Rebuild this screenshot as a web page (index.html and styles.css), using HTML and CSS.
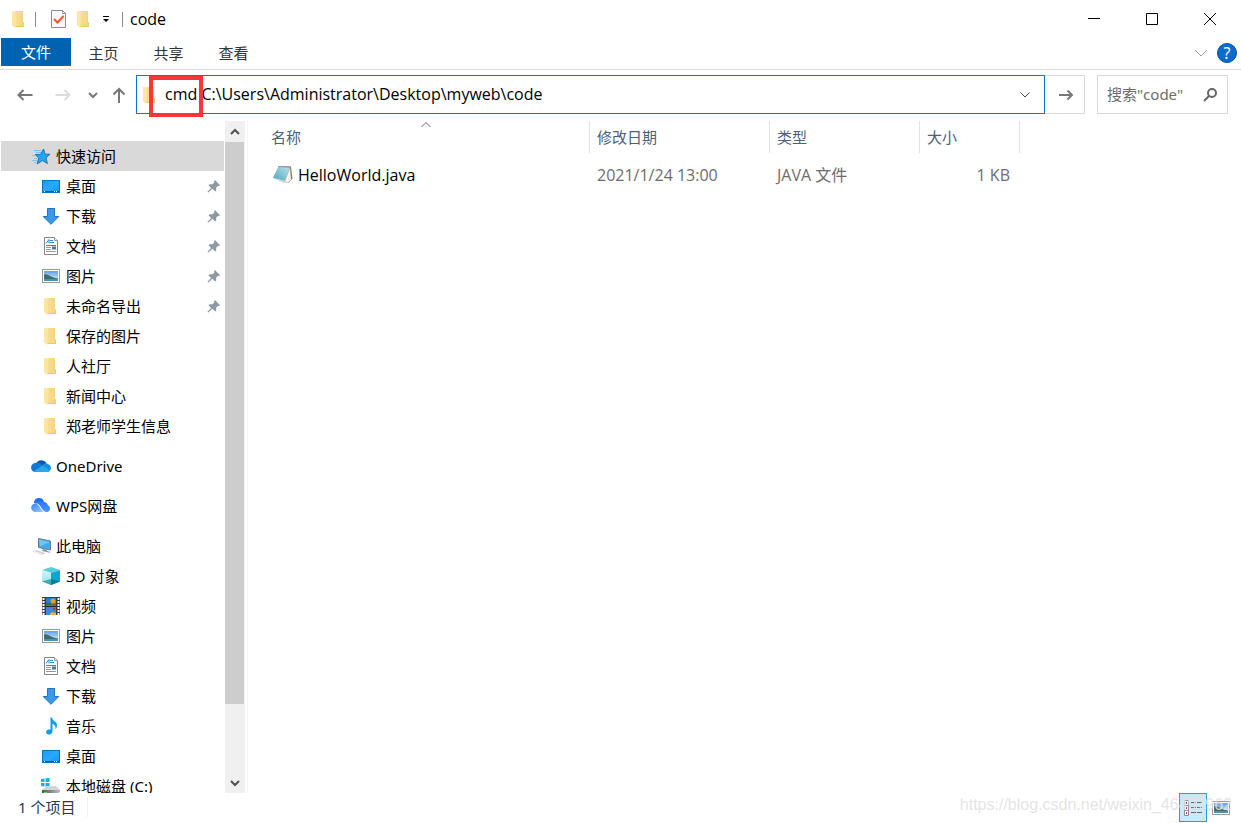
FILE: index.html
```html
<!DOCTYPE html>
<html lang="zh-CN">
<head>
<meta charset="utf-8">
<title>code</title>
<link rel="stylesheet" href="styles.css">
</head>
<body>
<svg class="sprite" aria-hidden="true">
  <defs>
    <linearGradient id="gFolder" x1="0" y1="0" x2="1" y2="0"><stop offset="0" stop-color="#f8df97"/><stop offset="1" stop-color="#f5d477"/></linearGradient>
    <linearGradient id="gDesk" x1="0" y1="0" x2="1" y2="1"><stop offset="0" stop-color="#149bfb"/><stop offset=".5" stop-color="#2aa9ff"/><stop offset="1" stop-color="#0c97fa"/></linearGradient>
    <linearGradient id="gSky" x1="0" y1="0" x2="0" y2="1"><stop offset="0" stop-color="#5d9fe8"/><stop offset="1" stop-color="#e4f3fb"/></linearGradient>
    <linearGradient id="gNote" x1="0" y1="1" x2="1" y2="0"><stop offset="0" stop-color="#4fa5ba"/><stop offset="1" stop-color="#bde5ee"/></linearGradient>
    <linearGradient id="gWps" x1="0" y1="0" x2="0" y2="1"><stop offset="0" stop-color="#1a68f5"/><stop offset="1" stop-color="#4c9bff"/></linearGradient>
    <linearGradient id="gWpsFront" x1="0" y1="0" x2="1" y2="1"><stop offset="0" stop-color="#2f80f8"/><stop offset="1" stop-color="#a4cdff"/></linearGradient>
    <linearGradient id="gCube" x1="0" y1="0" x2="0" y2="1"><stop offset="0" stop-color="#d4f4f6"/><stop offset="1" stop-color="#8fe3e9"/></linearGradient>
    <linearGradient id="gDrive" x1="0" y1="0" x2="1" y2="0"><stop offset="0" stop-color="#55595c"/><stop offset="1" stop-color="#b9bcbe"/></linearGradient>
  </defs>
  <symbol id="folder" viewBox="0 0 20 20"><path d="M6 2h8v11l.8.8V18H6z" fill="url(#gFolder)"/><path d="M14 13l.8.8V18H7v-1h7z" fill="#efca68"/><path d="M3 2h4L6 5v13.500L3 16z" fill="#fde9ad"/><path d="M3 2.500L6.500 5v14L3 16.500z" fill="#fde5a3"/></symbol>
  <symbol id="desk" viewBox="0 0 20 20"><rect x="1.500" y="4.500" width="17" height="12" fill="url(#gDesk)" stroke="#0b74bd"/><path d="M2 15.500h16" stroke="#07599b"/><path d="M3 15.500h1M13 15.500h1M15 15.500h1" stroke="#fff"/></symbol>
  <symbol id="down" viewBox="0 0 20 20"><path d="M6.500 2.500h7v8h4.300L10 18.300 2.200 10.500h4.300z" fill="#3b97e8" stroke="#2672bd"/></symbol>
  <symbol id="doc" viewBox="0 0 20 20"><path d="M3.500 1.500h10l3 3v14h-13z" fill="#fff" stroke="#858585"/><path d="M13.500 1.500v3h3" fill="#eee" stroke="#999"/><path d="M5 7.500L8 3.500v4M9 4.500h3M9 6.500h4M5 9.500h10" fill="none" stroke="#1b8fd8"/><path d="M11 10.500h4v3h-4z" fill="#347eb5"/><path d="M5 11.500h5M5 13.500h5M5 15.500h10" stroke="#999"/></symbol>
  <symbol id="pic" viewBox="0 0 20 20"><rect x="1.500" y="3.500" width="17" height="13" fill="#fff" stroke="#999"/><rect x="3" y="5" width="14" height="10" fill="url(#gSky)"/><path d="M3 8.500c4-1 6 3 14 4v1H3z" fill="#3f6f68"/><path d="M3 13h14v2H3z" fill="#4a93b8"/></symbol>
  <symbol id="star" viewBox="0 0 20 20"><path d="M12.500 3l1.600 5.200H19l-4 3.600 1.400 5.700-5-3-5.200 3.500 1.500-6-3.700-3.500H9.500z" fill="#28a3ef" stroke="#1976bb"/><path d="M3 4.500h7M5 6.500h5M1 9.500h4M3 12.500h3M1 14.500h5M3 16.500h2" stroke="#82bfe9"/></symbol>
  <symbol id="pin" viewBox="0 0 16 16"><path d="M9 1l6 6-1.300.9-1.100-.3-2.200 2.300.2 3.200-1.200 1.200-3.200-3.200L1.500 15.500l-1-1 4.200-4.300-3-3L3 6l3.200.1 2.300-2-.4-1.600z" fill="#8e99a3"/></symbol>
  <symbol id="onedrive" viewBox="0 0 20 20"><path d="M5 7.500A6 6 0 0 1 15.500 7l-7 6.500z" fill="#0a59ae"/><path d="M4.500 16A4.500 4.500 0 0 1 4.600 7c3-.6 4.800.7 7.400 2.700L5 16z" fill="#1178d4"/><path d="M11.500 9.500C13 7 16 6.500 17 8.200a4 4 0 0 1-.5 7.800H8z" fill="#1490df"/><path d="M2.500 15.500L11.500 9.500 19 14.500a3.500 3.500 0 0 1-3 1.500H4.500a5 5 0 0 1-2-.5z" fill="#28a8ea"/></symbol>
  <symbol id="wps" viewBox="0 0 20 20"><path d="M3 7a5 5 0 0 1 9.900-1 4.500 4.500 0 0 1 4 3.200A3.600 3.600 0 0 1 16.500 16H13L7 8z" fill="url(#gWps)"/><path d="M4.500 16a4.200 4.200 0 1 1 3.400-6.500l3 4 1.600 2.500z" fill="url(#gWpsFront)"/><path d="M6.500 8c2.500 0 4 8 8 8" fill="none" stroke="#fff"/></symbol>
  <symbol id="pc" viewBox="0 0 20 20"><path d="M7.500 2.500l12 2.500v9l-12-2.500z" fill="#41a9ee" stroke="#6e7c85"/><path d="M8 3.500l11 2.500L9 10.500z" fill="#71c4f8"/><path d="M12 13l4 1v1l3 .7v1l-8-1.700z" fill="#8a939a"/><path d="M1 15.500L5 14l9.500 3L11 19z" fill="#cfd3d8"/><path d="M3 15.500l8 2.500" stroke="#f8f8f8"/></symbol>
  <symbol id="cube" viewBox="0 0 20 20"><path d="M1 4l9-3 9 3-9 3z" fill="#5bcbdf"/><path d="M1 4l9 3v12L1 15.500z" fill="url(#gCube)"/><path d="M10 7l9-3v11.500L10 19z" fill="#0ea7cc"/><path d="M1 15.500L10 13v6z" fill="#43a9b5"/><path d="M10 13l9 2.500L10 19z" fill="#087f97"/></symbol>
  <symbol id="video" viewBox="0 0 20 20"><path d="M1 1h18v18H1z" fill="#3b3b3b"/><path d="M5 2h10v8H5z" fill="#287cd4"/><path d="M5 11h10v8H5z" fill="#3d89de"/><path d="M5 10.500h10" stroke="#222"/><circle cx="12" cy="5" r="2.500" fill="#d9a520"/><path d="M5 7h5v2H5z" fill="#2d7336"/><path d="M11 8h3v1h-3zM12 12h2v2h-2z" fill="#c7321d"/><path d="M9 18l2-2 4 1v2H9z" fill="#e8b833"/><path d="M2.500 2v17M17.500 2v17" stroke="#fff" stroke-width="2" stroke-dasharray="2 1"/></symbol>
  <symbol id="music" viewBox="0 0 20 20"><path d="M9.500 1.500h1.700c0 3.500 4.800 3.800 4.800 7.700 0 1.500-.6 2.800-1.500 3.800.4-3-1-4.500-3-5.300v7.200c0 2.500-2 3.600-4 3.600-3 0-3.500-4.500.5-4.900h1.500z" fill="#0b9cf5"/></symbol>
  <symbol id="drive" viewBox="0 0 20 20"><path d="M0 3l3.500-.5V6H0zM4.500 2.300L8.500 2v4h-4zM0 7h3.500v3.500L0 10zM4.500 7h4v4l-4-.5z" fill="#16aee8"/><path d="M1 14l5-4h9l4 4v2H1z" fill="#d2d4d6"/><path d="M1 14l18 0v2l-5 3H1z" fill="url(#gDrive)"/><path d="M3 16.500h3" stroke="#52e24f"/></symbol>
  <symbol id="note" viewBox="0 0 22 20"><path d="M8 1l11 .5 1.500 12-4 4.500-3-1z" fill="#907f69"/><path d="M6.500 1L18 2l-5 14-12-3z" fill="url(#gNote)"/><path d="M18 3l1 11.500-3.200 3.500-2.800-2z" fill="#f4f4ef"/><path d="M6.500 1L18.500 1.500l-.3 1.200L6 2z" fill="#8c9a9e"/><path d="M1 13l12 3 2.800 2-4-.3z" fill="#c8d4d6"/></symbol>
</svg>

<header class="titlebar">
  <div class="quick">
    <svg class="i20"><use href="#folder"/></svg>
    <span class="rule"></span>
    <button class="bare tick" aria-label="属性"><svg width="20" height="20" viewBox="0 0 20 20"><path d="M2.500 1.500h11l3 3v14h-14z" fill="#f6f8fb" stroke="#8b8b8b"/><path d="M13.500 1.500v3h3" fill="none" stroke="#999"/><path d="M5 10l3.500 3.500L14.500 7" fill="none" stroke="#ea5b22" stroke-width="2"/></svg></button>
    <button class="bare" aria-label="新建文件夹"><svg class="i20"><use href="#folder"/></svg></button>
    <button class="bare more" aria-label="自定义快速访问工具栏"><svg width="8" height="8" viewBox="0 0 8 8"><path d="M1 1.500h6" stroke="#000"/><path d="M1 4h6L4 7z"/></svg></button>
    <span class="rule"></span>
  </div>
  <h1 class="caption">code</h1>
  <div class="window-buttons">
    <button class="bare" aria-label="最小化"><svg width="12" height="12" viewBox="0 0 12 12"><path d="M0 5.500h12" stroke="#000"/></svg></button>
    <button class="bare" aria-label="最大化"><svg width="12" height="12" viewBox="0 0 12 12"><path d="M.5.500h11v11H.5z" fill="none" stroke="#000"/></svg></button>
    <button class="bare" aria-label="关闭"><svg width="12" height="12" viewBox="0 0 12 12"><path d="M0 0l12 12M12 0L0 12" stroke="#000"/></svg></button>
  </div>
</header>

<nav class="ribbon">
  <button class="tab tab-file">文件</button>
  <button class="tab">主页</button>
  <button class="tab">共享</button>
  <button class="tab">查看</button>
  <button class="bare expand" aria-label="展开功能区"><svg width="12" height="8" viewBox="0 0 12 8"><path d="M0 1l6 6 6-6" fill="none" stroke="#9a9a9a"/></svg></button>
  <button class="help" aria-label="帮助">?</button>
</nav>

<div class="toolbar">
  <div class="history">
    <button class="bare" aria-label="返回"><svg width="16" height="16" viewBox="0 0 16 16"><path d="M15.500 8H1.500M6.500 3L1.500 8l5 5" fill="none" stroke="#777" stroke-width="2"/></svg></button>
    <button class="bare" aria-label="前进"><svg width="16" height="16" viewBox="0 0 16 16"><path d="M.5 8h14M9.500 3l5 5-5 5" fill="none" stroke="#ddd" stroke-width="2"/></svg></button>
    <button class="bare recent" aria-label="最近浏览的位置"><svg width="10" height="16" viewBox="0 0 10 16"><path d="M1 6l4 4 4-4" fill="none" stroke="#777" stroke-width="2"/></svg></button>
    <button class="bare" aria-label="上移"><svg width="14" height="18" viewBox="0 0 14 18"><path d="M7 17V3M1.500 8.500L7 3l5.500 5.500" fill="none" stroke="#777" stroke-width="2"/></svg></button>
  </div>
  <div class="address">
    <svg class="i20"><use href="#folder"/></svg>
    <input class="path" type="text" aria-label="地址" value="cmd C:\Users\Administrator\Desktop\myweb\code">
    <button class="bare" aria-label="以前的位置"><svg width="10" height="8" viewBox="0 0 10 8"><path d="M.5 1.500L5 6l4.500-4.500" fill="none" stroke="#444"/></svg></button>
    <span class="mark"></span>
  </div>
  <button class="go" aria-label="转到"><svg width="16" height="16" viewBox="0 0 16 16"><path d="M1 8h13M9.500 3.500L14 8l-4.500 4.500" fill="none" stroke="#777" stroke-width="2"/></svg></button>
  <div class="search">
    <input type="text" aria-label="搜索" placeholder='搜索"code"'>
    <svg width="14" height="14" viewBox="0 0 14 14"><circle cx="9" cy="5" r="4" fill="none" stroke="#666" stroke-width="2"/><path d="M6 8L1 13" stroke="#666" stroke-width="2"/></svg>
  </div>
</div>

<main class="content">
  <nav class="tree" aria-label="导航窗格">
    <ul>
      <li><a class="root current" href="#"><svg class="i20"><use href="#star"/></svg>快速访问</a></li>
      <li><a href="#"><svg class="i20"><use href="#desk"/></svg>桌面<svg class="pin"><use href="#pin"/></svg></a></li>
      <li><a href="#"><svg class="i20"><use href="#down"/></svg>下载<svg class="pin"><use href="#pin"/></svg></a></li>
      <li><a href="#"><svg class="i20"><use href="#doc"/></svg>文档<svg class="pin"><use href="#pin"/></svg></a></li>
      <li><a href="#"><svg class="i20"><use href="#pic"/></svg>图片<svg class="pin"><use href="#pin"/></svg></a></li>
      <li><a href="#"><svg class="i20"><use href="#folder"/></svg>未命名导出<svg class="pin"><use href="#pin"/></svg></a></li>
      <li><a href="#"><svg class="i20"><use href="#folder"/></svg>保存的图片</a></li>
      <li><a href="#"><svg class="i20"><use href="#folder"/></svg>人社厅</a></li>
      <li><a href="#"><svg class="i20"><use href="#folder"/></svg>新闻中心</a></li>
      <li><a href="#"><svg class="i20"><use href="#folder"/></svg>郑老师学生信息</a></li>
    </ul>
    <ul>
      <li><a class="root" href="#"><svg class="i20"><use href="#onedrive"/></svg>OneDrive</a></li>
    </ul>
    <ul>
      <li><a class="root" href="#"><svg class="i20"><use href="#wps"/></svg>WPS网盘</a></li>
    </ul>
    <ul>
      <li><a class="root" href="#"><svg class="i20"><use href="#pc"/></svg>此电脑</a></li>
      <li><a href="#"><svg class="i20"><use href="#cube"/></svg>3D 对象</a></li>
      <li><a href="#"><svg class="i20"><use href="#video"/></svg>视频</a></li>
      <li><a href="#"><svg class="i20"><use href="#pic"/></svg>图片</a></li>
      <li><a href="#"><svg class="i20"><use href="#doc"/></svg>文档</a></li>
      <li><a href="#"><svg class="i20"><use href="#down"/></svg>下载</a></li>
      <li><a href="#"><svg class="i20"><use href="#music"/></svg>音乐</a></li>
      <li><a href="#"><svg class="i20"><use href="#desk"/></svg>桌面</a></li>
      <li><a href="#"><svg class="i20"><use href="#drive"/></svg>本地磁盘 (C:)</a></li>
    </ul>
  </nav>
  <div class="scrollbar">
    <button class="bare" aria-label="向上滚动"><svg width="10" height="8" viewBox="0 0 10 8"><path d="M1 6l4-4 4 4" fill="none" stroke="#505050" stroke-width="2"/></svg></button>
    <div class="track"><div class="thumb"></div></div>
    <button class="bare" aria-label="向下滚动"><svg width="10" height="8" viewBox="0 0 10 8"><path d="M1 2l4 4 4-4" fill="none" stroke="#505050" stroke-width="2"/></svg></button>
  </div>
  <section class="files">
    <table>
      <colgroup><col class="c-name"><col class="c-date"><col class="c-type"><col class="c-size"></colgroup>
      <thead>
        <tr><th>名称<svg class="sort" width="10" height="6" viewBox="0 0 10 6"><path d="M.5 5L5 .5 9.500 5" fill="none" stroke="#666"/></svg></th><th>修改日期</th><th>类型</th><th>大小</th></tr>
      </thead>
      <tbody>
        <tr><td class="name"><div class="file"><svg width="22" height="20"><use href="#note"/></svg>HelloWorld.java</div></td><td>2021/1/24 13:00</td><td>JAVA 文件</td><td class="size">1 KB</td></tr>
      </tbody>
    </table>
  </section>
</main>

<footer class="status">
  <span class="count">1 个项目</span>
  <div class="views">
    <button class="view active" aria-label="详细信息"><svg width="20" height="20" viewBox="0 0 20 20"><path d="M1.500 2.500h4v5h-4zM1.500 7.500h4v5h-4zM1.500 12.500h4v5h-4z" fill="#fff" stroke="#8a8f93"/><path d="M3 5h1M3 10h1M3 15h1" stroke="#a33" stroke-width="2"/><path d="M8 4.500h5M14 4.500h5M8 9.500h5M14 9.500h5M8 14.500h5M14 14.500h5" stroke="#666"/></svg></button>
    <button class="view" aria-label="大图标"><svg class="i20"><use href="#pic"/></svg></button>
  </div>
  <span class="watermark">https://blog.csdn.net/weixin_46497962</span>
</footer>
</body>
</html>
```
FILE: styles.css
```css
* { box-sizing: border-box; }
html, body { height: 100%; }
body {
  margin: 0;
  display: flex;
  flex-direction: column;
  overflow: hidden;
  background: #fff;
  color: #000;
  font: 15px/20px "Noto Sans", "Noto Sans CJK SC", sans-serif;
}
button, input { font: inherit; color: inherit; }
svg { display: block; flex: none; }
.sprite { position: absolute; width: 0; height: 0; }
.i20 { width: 20px; height: 20px; }
.bare {
  display: flex;
  align-items: center;
  justify-content: center;
  padding: 0;
  border: 0;
  background: none;
}
.caption, .path, .file, td { font: 16px/20px "Open Sans", "Noto Sans CJK SC", sans-serif; }

.titlebar { display: flex; align-items: center; flex: none; height: 38px; padding-left: 9px; }
.quick { display: flex; align-items: center; }
.rule { width: 1px; height: 15px; margin: 0 7px 0 6px; background: #8c8c8c; }
.tick { margin: 0 5px 0 6px; }
.more { width: 20px; margin-left: 2px; }
.caption { margin: 0; }
.window-buttons { display: flex; margin-left: auto; padding-right: 2px; }
.window-buttons .bare { width: 58px; height: 38px; }

.ribbon {
  display: flex;
  align-items: center;
  flex: none;
  height: 32px;
  padding: 0 4px 2px 0;
  border-bottom: 1px solid #dadbdc;
}
.tab { width: 65px; height: 28px; padding: 0; border: 0; background: none; color: #333; }
.tab-file { align-self: flex-start; width: 70px; margin-left: 1px; background: #0063b1; color: #fff; }
.expand { width: 32px; height: 28px; margin-left: auto; }
.help {
  width: 20px;
  height: 20px;
  padding: 0;
  border: 1px solid #0b4f8f;
  border-radius: 50%;
  background: #0a6cce;
  color: #fff;
  font-size: 16px;
  line-height: 18px;
}

.toolbar { display: flex; align-items: center; flex: none; height: 51px; padding: 0 13px 2px 17px; }
.history { display: flex; align-items: center; flex: none; width: 119px; }
.history .bare + .bare { margin-left: 22px; }
.history .recent.recent { margin-left: 17px; }
.history .recent + .bare.bare { margin-left: 14px; }
.address {
  position: relative;
  display: flex;
  align-items: center;
  flex: 1;
  height: 39px;
  padding: 0 14px 0 3px;
  border: 1px solid #0078d7;
}
.path { flex: 1; min-width: 0; padding: 0 0 2px 5px; border: 0; outline: 0; background: none; }
.mark {
  position: absolute;
  left: 12px;
  top: 0;
  width: 54px;
  height: 41px;
  border: 4px solid #fd3536;
}
.go {
  display: flex;
  align-items: center;
  justify-content: center;
  width: 40px;
  height: 39px;
  padding: 0 0 0 2px;
  border: 1px solid #d9d9d9;
  border-left: 0;
  background: #fff;
}
.search {
  display: flex;
  align-items: center;
  width: 131px;
  height: 39px;
  margin-left: 12px;
  padding: 0 10px 0 9px;
  border: 1px solid #d9d9d9;
}
.search input { flex: 1; min-width: 0; padding: 0 0 2px; border: 0; outline: 0; background: none; }
.search input::placeholder { color: #6d6d6d; opacity: 1; }

.content { display: flex; flex: 1; min-height: 0; }
.tree { width: 225px; padding: 20px 1px 0; overflow: hidden; }
.tree ul { margin: 0 0 10px; padding: 0; list-style: none; }
.tree a {
  display: flex;
  align-items: center;
  gap: 5px;
  height: 30px;
  padding: 0 3px 0 40px;
  color: #000;
  text-decoration: none;
}
.tree .root { padding-left: 30px; }
.tree .current { background: #d9d9d9; }
.pin { width: 14px; height: 14px; margin-left: auto; }
.scrollbar { display: flex; flex-direction: column; width: 20px; background: #f0f0f0; }
.scrollbar .bare { height: 21px; padding-right: 1px; }
.track { flex: 1; padding-right: 1px; }
.thumb { height: 89.2%; background: #cdcdcd; }
.files { flex: 1; margin-left: 2px; padding-left: 17px; border-left: 1px solid #f5f5f5; }

table { width: 755px; table-layout: fixed; border-collapse: separate; border-spacing: 0; }
.c-name { width: 325px; }
.c-date { width: 180px; }
.c-type { width: 150px; }
.c-size { width: 100px; }
th {
  position: relative;
  height: 32px;
  padding: 0 7px;
  border-right: 1px solid #e2e2e2;
  color: #4c607a;
  font-weight: 400;
  text-align: left;
}
th:first-child { padding-left: 6px; }
.sort { position: absolute; left: 156px; top: 1px; }
td { padding: 12px 7px 0; color: #6d6d6d; }
.name { color: #000; }
.file { display: flex; align-items: center; gap: 4px; }
.size { padding-right: 10px; text-align: right; }

.status { position: relative; display: flex; flex: none; height: 30px; padding: 0 6px 0 18px; }
.count { align-self: flex-start; margin-top: 4px; padding-right: 12px; border-right: 1px solid #f0f0f0; color: #1e395b; }
.views { display: flex; margin-left: auto; }
.view {
  display: flex;
  align-items: center;
  justify-content: center;
  width: 28px;
  height: 29px;
  padding: 0;
  border: 1px solid transparent;
  background: none;
}
.view.active { border-color: #26a0da; background: #cce8f6; }
.watermark {
  position: absolute;
  right: 9px;
  top: 2px;
  color: rgba(225, 225, 225, 0.9);
  font: 16px/20px "Liberation Sans", Arial, sans-serif;
}
```
